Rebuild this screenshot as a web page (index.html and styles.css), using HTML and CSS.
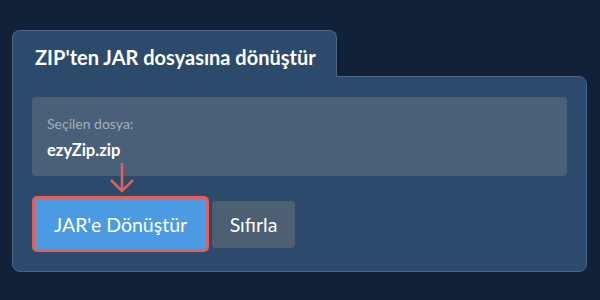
FILE: index.html
```html
<!DOCTYPE html>
<html>
    <head>
        <title>ZIP'ten JAR dosyasına dönüştür</title>
        <meta charset="UTF-8">
        <meta name="viewport" content="width=device-width, initial-scale=1.0">
        <link rel="stylesheet" href="styles.css">
    </head>
    <body>
        <div class="wrap">
            <div class="tab">ZIP'ten JAR dosyasına dönüştür</div>
            <div class="panel">
                <div class="file">
                    <div class="lbl">Seçilen dosya:</div>
                    <div class="fname">ezyZip.zip</div>
                </div>
                <div class="btns">
                    <button class="btn go">JAR'e Dönüştür</button>
                    <button class="btn reset">Sıfırla</button>
                </div>
                <svg class="arrow" width="30" height="32" viewBox="0 0 30 32">
                    <path d="M14 0 V28 M3 17 L14 28 L25 17" fill="none" stroke="#e0605a" stroke-width="2.5"/>
                </svg>
            </div>
        </div>
    </body>
</html>
```

FILE: styles.css
```css
*{
    box-sizing: border-box;
}
body{
    margin: 0;
    background-color: #112238;
    font-family: Lato, "Open Sans", sans-serif;
    color: white;
}
.wrap{
    padding: 30px 13px 0 12px;
}
.tab{
    display: inline-block;
    width: 325px;
    height: 47px;
    padding: 14px 0 0 22px;
    background-color: #2c4a6b;
    border: 1px solid #4b6688;
    border-bottom: 0;
    border-radius: 8px 8px 0 0;
    font-size: 20px;
    font-weight: bold;
    margin-bottom: -1px;
    position: relative;
    z-index: 1;
}
.panel{
    position: relative;
    background-color: #2c4a6b;
    border: 1px solid #4b6688;
    border-radius: 0 8px 8px 8px;
    padding: 20px 19px 19px 19px;
    height: 196px;
}
.file{
    background-color: #4a5f78;
    border-radius: 4px;
    height: 79px;
    padding: 18px 14px 0 15px;
}
.lbl{
    font-size: 14px;
    color: #a3afbd;
}
.fname{
    font-size: 16.5px;
    font-weight: bold;
    margin-top: 8px;
}
.btns{
    display: flex;
    align-items: center;
    gap: 3px;
    margin-top: 20px;
}
.btn{
    font-family: Lato, "Open Sans", sans-serif;
    font-size: 19.5px;
    color: white;
    border: 0;
    border-radius: 4px;
}
.go{
    width: 177px;
    height: 56px;
    background-color: #4b9be3;
    border: 3px solid #e0605a;
    border-radius: 5px;
}
.reset{
    width: 83px;
    height: 47px;
    background-color: #4d5f72;
}
.arrow{
    position: absolute;
    left: 95px;
    top: 86px;
}
```
